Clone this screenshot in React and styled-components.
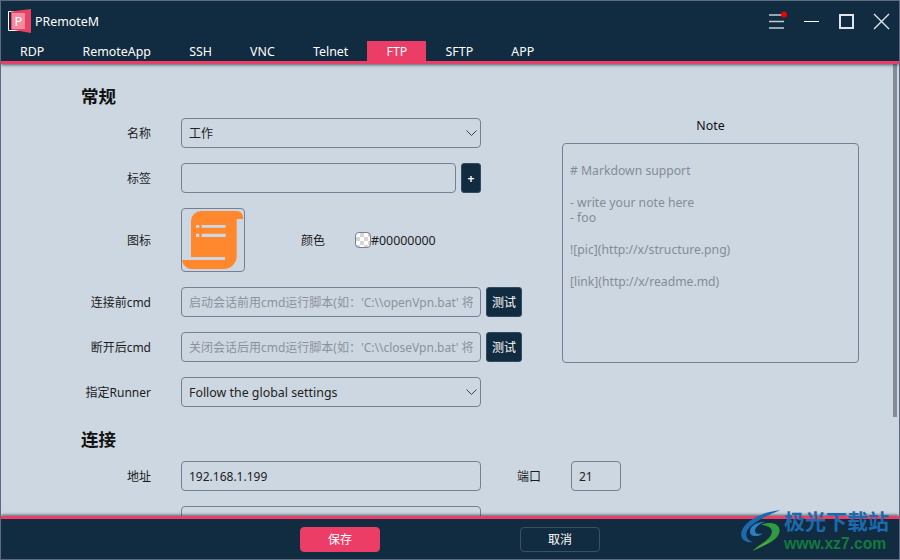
import React from 'react'
import styled, { createGlobalStyle } from 'styled-components'

const navy = '#112b40'
const pink = '#ec3d66'
const paper = '#cdd7e1'
const line = '#758094'

const GlobalStyle = createGlobalStyle`
  html, body {
    margin: 0;
    padding: 0;
    overflow: hidden;
    background: ${paper};
  }
  * { box-sizing: border-box; }
`

const Frame = styled.div`
  position: relative;
  width: 900px;
  height: 560px;
  display: flex;
  flex-direction: column;
  overflow: hidden;
  border: 1px solid #5d6a80;
  font-family: "Noto Sans", "Noto Sans CJK SC", sans-serif;
  font-size: 12.4px;
  color: #1c1c1c;
  background: ${paper};
`

const Header = styled.header`
  position: relative;
  z-index: 2;
  flex: none;
  height: 63px;
  background: ${navy};
  border-bottom: 3px solid ${pink};
  box-shadow: 0 1px 3px rgba(30, 40, 50, 0.7);
`

const TitleBar = styled.div`
  height: 40px;
  display: flex;
  align-items: center;
  padding: 0 10px 0 6px;
`

const AppName = styled.span`
  margin-left: 4px;
  color: #fff;
  font-size: 12.4px;
`

const WindowButtons = styled.div`
  margin-left: auto;
  display: flex;
  gap: 20px;
`

const WinIcon = styled.svg`
  display: block;
  width: 15px;
  height: 15px;
  overflow: visible;
`

const Tabs = styled.nav`
  height: 20px;
  display: flex;
`

const Tab = styled.div`
  padding: 1px 19.1px 0;
  line-height: 20px;
  color: #fff;
  font-size: 12.4px;
  background: ${p => (p.$active ? pink : 'transparent')};
`

const Main = styled.main`
  position: relative;
  flex: 1;
  min-height: 0;
  overflow: hidden;
  padding: 21px 0 0 80px;
`

const Top = styled.div`
  display: flex;
  gap: 40px;
`

const LeftCol = styled.div`
  width: 441px;
  flex: none;
`

const NoteCol = styled.div`
  width: 297px;
  flex: none;
  padding-top: 32px;
`

const Heading = styled.h2`
  margin: ${p => (p.$second ? '21px' : '0')} 0 9px;
  height: 24px;
  line-height: 22px;
  font-size: 17.5px;
  font-weight: 700;
  color: #111;
`

const Rows = styled.div`
  display: flex;
  flex-direction: column;
  gap: 15px;
`

const Row = styled.div`
  display: flex;
  align-items: center;
`

const Label = styled.label`
  flex: none;
  width: 70px;
  margin-right: 30px;
  padding-top: 2px;
  text-align: right;
  white-space: nowrap;
  font-size: 12px;
  line-height: 16px;
`

const Field = styled.div`
  flex: none;
  width: 300px;
  height: 30px;
  display: flex;
  align-items: center;
  justify-content: space-between;
  padding: 0 3px 0 7px;
  border: 1px solid ${line};
  border-radius: 4px;
  font-size: ${p => (p.$cjk ? '12px' : '12.4px')};
  color: #222;
`

const TextInput = styled.input`
  flex: none;
  width: ${p => p.$width || 300}px;
  height: 30px;
  padding: 0 7px;
  border: 1px solid ${line};
  border-radius: 4px;
  background: transparent;
  outline: none;
  font-family: inherit;
  font-size: 12px;
  color: #222;
  &::placeholder {
    color: #8a929e;
    opacity: 1;
  }
`

const SmallButton = styled.button`
  flex: none;
  width: ${p => p.$width || 36}px;
  height: 30px;
  margin-left: 5px;
  padding: 0;
  border: 1px solid #33495d;
  border-radius: 3px;
  background: ${navy};
  color: #fff;
  font-family: inherit;
  font-size: 12px;
  font-weight: ${p => (p.$bold ? 700 : 400)};
`

const IconBox = styled.div`
  flex: none;
  width: 64px;
  height: 64px;
  border: 1px solid ${line};
  border-radius: 4px;
`

const ColorLabel = styled(Label)`
  width: 24px;
  margin: 0 30px 0 56px;
`

const Swatch = styled.span`
  flex: none;
  width: 16px;
  height: 16px;
  border: 1px solid ${line};
  border-radius: 4px;
  background: repeating-conic-gradient(#d6d6d6 0 25%, #fff 0 50%) 0 0 / 8px 8px;
`

const PortLabel = styled(Label)`
  width: 24px;
  margin: 0 30px 0 36px;
`

const NoteTitle = styled.div`
  height: 18px;
  line-height: 18px;
  margin-bottom: 8px;
  text-align: center;
  font-size: 12.4px;
  color: #111;
`

const NoteArea = styled.textarea`
  display: block;
  width: 297px;
  height: 220px;
  padding: 19px 7px 0;
  border: 1px solid ${line};
  border-radius: 4px;
  background: transparent;
  outline: none;
  resize: none;
  font-family: inherit;
  font-size: 12.2px;
  line-height: 15.8px;
  &::placeholder {
    color: #848c98;
    opacity: 1;
  }
`

const ScrollThumb = styled.div`
  position: absolute;
  top: 0;
  right: 2px;
  width: 4px;
  height: 353px;
  background: #858b94;
`

const Footer = styled.footer`
  position: relative;
  z-index: 2;
  flex: none;
  height: 43px;
  display: flex;
  align-items: center;
  padding-left: 299px;
  background: ${navy};
  border-top: 3px solid ${pink};
  box-shadow: 0 -1px 3px rgba(30, 40, 50, 0.7);
`

const FootButton = styled.button`
  width: 80px;
  height: 25px;
  margin-right: ${p => (p.$primary ? '140px' : '0')};
  padding: 0;
  border: 1px solid ${p => (p.$primary ? pink : '#3b5064')};
  border-radius: 4px;
  background: ${p => (p.$primary ? pink : 'transparent')};
  color: #fff;
  font-family: inherit;
  font-size: 12px;
`

const Watermark = styled.div`
  position: absolute;
  right: 10px;
  bottom: 8px;
  z-index: 3;
  display: flex;
  align-items: center;
`

const MarkText = styled.div`
  margin-left: 1px;
  display: flex;
  flex-direction: column;
  gap: 6px;
`

const MarkTitle = styled.span`
  font-family: "Noto Sans CJK SC", sans-serif;
  font-size: 21px;
  line-height: 22px;
  font-weight: 700;
  color: #1c69ad;
`

const MarkUrl = styled.span`
  font-family: "Liberation Sans", sans-serif;
  font-size: 15.7px;
  line-height: 14px;
  font-weight: 700;
  color: #117a3e;
`

const Chevron = () => (
  <svg width="11" height="6" viewBox="0 0 11 6" fill="none" stroke="#39424e" strokeWidth="1">
    <path d="M0.5 0.5 L5.5 5.5 L10.5 0.5" />
  </svg>
)

const AppLogo = () => (
  <svg width="24" height="24" viewBox="0 0 24 24">
    <path d="M1.5 2.5 H17 V21.5 H1.5 Z" fill="none" stroke="#fff" strokeWidth="1" />
    <path d="M4 2.5 L24 0 V24 L4 20.5 Z" fill="#ea4267" />
    <rect x="5" y="4" width="13" height="16" fill="#f58a9f" />
    <text x="7.5" y="16.5" fontSize="13" fontFamily="Noto Sans, sans-serif" fill="#fff">P</text>
  </svg>
)

const ScrollIcon = () => (
  <svg width="62" height="62" viewBox="1 1 62 62">
    <path
      d="M10 13 a10 10 0 0 1 10 -10 H56 a6 6 0 0 1 6 6 v2 H55.7 V48 a13 13 0 0 1 -13 13 H11 a10 10 0 0 1 -10 -9 H44 V49 H10 Z"
      fill="#ff872d"
    />
    <rect x="15" y="17" width="3.3" height="2.8" fill={paper} />
    <rect x="20.7" y="17" width="24" height="2.8" fill={paper} />
    <rect x="15" y="25.7" width="3.3" height="3.3" fill={paper} />
    <rect x="20.7" y="25.7" width="24" height="3.3" fill={paper} />
  </svg>
)

const WatermarkLogo = () => (
  <svg width="44" height="41" viewBox="0 0 44 42" fill="none">
    <path d="M42 0 C24 2 6 10 2 22 C0 30 6 34 14 33 C6 30 5 24 10 18 C16 11 30 5 42 0 Z" fill="#1c69ad" />
    <path d="M26 12 C16 12 9 18 11 24 C13 28 20 27 24 24 C19 25 15 24 16 20 C17 17 21 14 26 12 Z" fill="#2a7fc4" />
    <path d="M22 15 C32 11 42 14 41 22 C40 31 26 36 13 42 C22 34 32 30 33 23 C34 18 28 16 22 15 Z" fill="#2f9b3f" />
    <path d="M13 42 C20 38 27 35 33 30 L20 38 Z" fill="#b7c22f" />
  </svg>
)

const tabs = ['RDP', 'RemoteApp', 'SSH', 'VNC', 'Telnet', 'FTP', 'SFTP', 'APP']

const notePlaceholder = `# Markdown support

- write your note here
- foo

![pic](http://x/structure.png)

[link](http://x/readme.md)`

export default function App() {
  return (
    <Frame>
      <GlobalStyle />
      <Header>
        <TitleBar>
          <AppLogo />
          <AppName>PRemoteM</AppName>
          <WindowButtons>
            <WinIcon viewBox="0 0 15 15" stroke="#c3ccd3" strokeWidth="1.5">
              <path d="M0 1 H15 M0 7.5 H15 M0 14 H15" />
              <circle cx="15" cy="0.5" r="3" fill="#f00000" stroke="none" />
            </WinIcon>
            <WinIcon viewBox="0 0 15 15" stroke="#fff" strokeWidth="1">
              <path d="M0 7.5 H15" />
            </WinIcon>
            <WinIcon viewBox="0 0 15 15" fill="none" stroke="#dfe5ea" strokeWidth="2">
              <path d="M1 1 H14 V14 H1 Z" />
            </WinIcon>
            <WinIcon viewBox="0 0 15 15" stroke="#dfe5ea" strokeWidth="1.4">
              <path d="M0 0 L15 15 M15 0 L0 15" />
            </WinIcon>
          </WindowButtons>
        </TitleBar>
        <Tabs>
          {tabs.map(t => (
            <Tab key={t} $active={t === 'FTP'}>{t}</Tab>
          ))}
        </Tabs>
      </Header>

      <Main>
        <Top>
          <LeftCol>
            <Heading>常规</Heading>
            <Rows>
              <Row>
                <Label>名称</Label>
                <Field $cjk>工作<Chevron /></Field>
              </Row>
              <Row>
                <Label>标签</Label>
                <TextInput $width={275} />
                <SmallButton $width={20} $bold>+</SmallButton>
              </Row>
              <Row>
                <Label>图标</Label>
                <IconBox><ScrollIcon /></IconBox>
                <ColorLabel>颜色</ColorLabel>
                <Swatch />
                <span>#00000000</span>
              </Row>
              <Row>
                <Label>连接前cmd</Label>
                <TextInput placeholder="启动会话前用cmd运行脚本(如：'C:\\openVpn.bat' 将在会话前执行)" />
                <SmallButton>测试</SmallButton>
              </Row>
              <Row>
                <Label>断开后cmd</Label>
                <TextInput placeholder="关闭会话后用cmd运行脚本(如：'C:\\closeVpn.bat' 将在会话后执行)" />
                <SmallButton>测试</SmallButton>
              </Row>
              <Row>
                <Label>指定Runner</Label>
                <Field>Follow the global settings<Chevron /></Field>
              </Row>
            </Rows>
          </LeftCol>
          <NoteCol>
            <NoteTitle>Note</NoteTitle>
            <NoteArea placeholder={notePlaceholder} />
          </NoteCol>
        </Top>

        <Heading $second>连接</Heading>
        <Rows>
          <Row>
            <Label>地址</Label>
            <TextInput defaultValue="192.168.1.199" />
            <PortLabel>端口</PortLabel>
            <TextInput $width={50} defaultValue="21" />
          </Row>
          <Row>
            <Label />
            <TextInput />
          </Row>
        </Rows>
        <ScrollThumb />
      </Main>

      <Footer>
        <FootButton $primary>保存</FootButton>
        <FootButton>取消</FootButton>
      </Footer>

      <Watermark>
        <WatermarkLogo />
        <MarkText>
          <MarkTitle>极光下载站</MarkTitle>
          <MarkUrl>www.xz7.com</MarkUrl>
        </MarkText>
      </Watermark>
    </Frame>
  )
}
